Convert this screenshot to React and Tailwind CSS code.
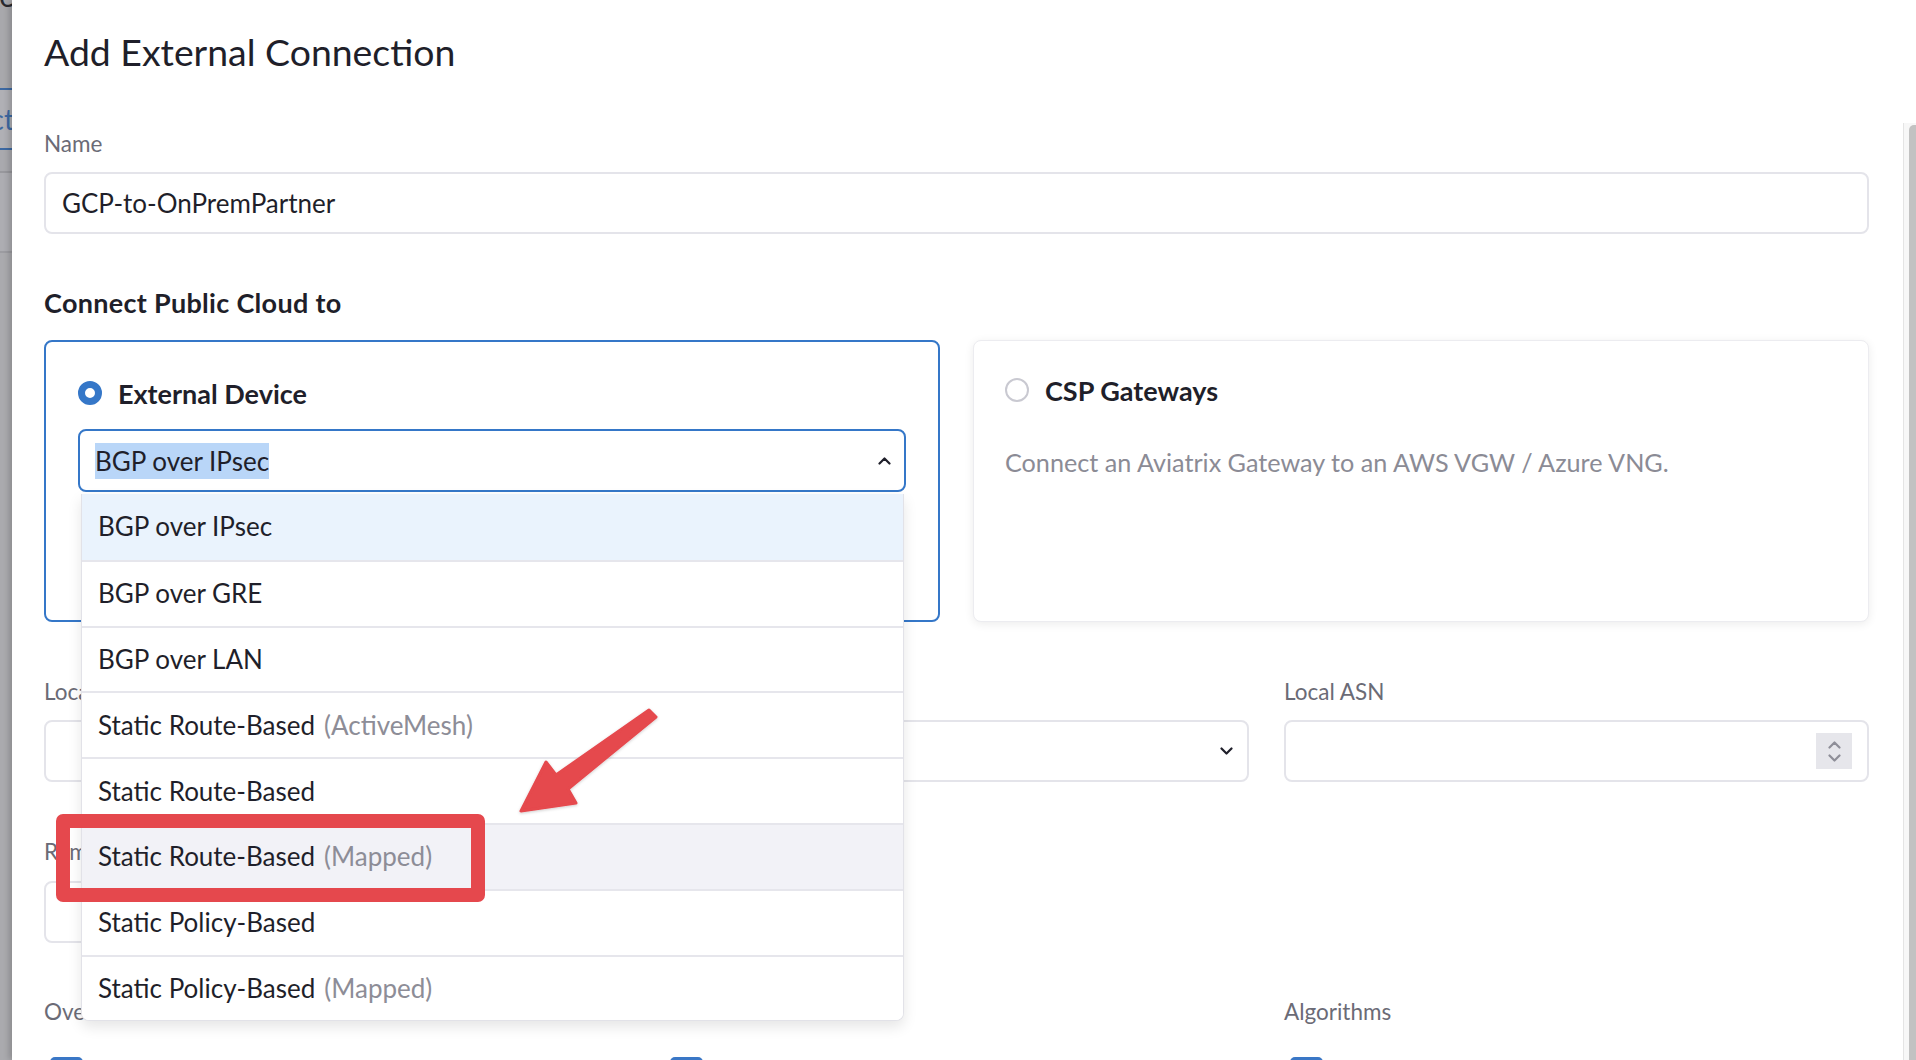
import React from "react";

function ChevronUp({ className = "", color = "#1f1f2a" }) {
  return (
    <svg className={className} width="13" height="8" viewBox="0 0 13 8" fill="none">
      <path d="M1.5 6.5 L6.5 1.5 L11.5 6.5" stroke={color} strokeWidth="2.2" strokeLinecap="round" strokeLinejoin="round" />
    </svg>
  );
}

function ChevronDown({ className = "", color = "#1f1f2a" }) {
  return (
    <svg className={className} width="13" height="8" viewBox="0 0 13 8" fill="none">
      <path d="M1.5 1.5 L6.5 6.5 L11.5 1.5" stroke={color} strokeWidth="2.2" strokeLinecap="round" strokeLinejoin="round" />
    </svg>
  );
}

const options = [
  { main: "BGP over IPsec", sub: "", bg: "bg-[#eaf3fd]" },
  { main: "BGP over GRE", sub: "", bg: "bg-white" },
  { main: "BGP over LAN", sub: "", bg: "bg-white" },
  { main: "Static Route-Based", sub: "(ActiveMesh)", bg: "bg-white" },
  { main: "Static Route-Based", sub: "", bg: "bg-white" },
  { main: "Static Route-Based", sub: "(Mapped)", bg: "bg-[#f2f2f7]" },
  { main: "Static Policy-Based", sub: "", bg: "bg-white" },
  { main: "Static Policy-Based", sub: "(Mapped)", bg: "bg-white" },
];

function Label({ children }) {
  return <div className="text-[22.5px] leading-[26.4px] text-[#6b6b76] whitespace-nowrap">{children}</div>;
}

function TextBox({ children }) {
  return (
    <div className="mt-[15px] flex h-[62px] items-center rounded-[8px] border-2 border-[#e4e4ea] bg-white pl-[16px] pr-[15px] text-[26px] leading-[1.2] text-[#1f1f2a]">
      {children}
    </div>
  );
}

export default function App() {
  return (
    <div className="relative flex h-[1060px] w-[1916px] overflow-hidden bg-white font-['Lato',sans-serif] text-[#1f1f2a]">
      {/* dimmed page behind the drawer */}
      <div className="flex w-[12px] shrink-0 flex-col overflow-hidden bg-[#a8a8ac]">
        <div className="flex h-[88px] justify-end overflow-hidden">
          <span className="-mr-[3px] -mt-[20px] text-[30px] leading-none text-[#2a2a30]">te</span>
        </div>
        <div className="flex h-[62px] items-center justify-end overflow-hidden border-y-2 border-[#3d69a2] bg-[#b0b0b5]">
          <span className="-mr-[2px] text-[28px] leading-none text-[#3d69a2]">ct</span>
        </div>
        <div className="h-[23px] border-b-2 border-[#98989d] bg-[#a9a9ae]"></div>
        <div className="h-[80px] border-b-2 border-[#9c9ca1] bg-[#adadb2]"></div>
        <div className="flex-1 bg-[#aaaaae]"></div>
      </div>

      {/* drawer panel */}
      <div className="relative flex flex-1 flex-col bg-white shadow-[-3px_0_6px_rgba(0,0,0,0.18)]">
        <div className="h-[123px] shrink-0 pl-[32px] pt-[30px]">
          <h1 className="text-[37.4px] font-normal leading-[1.2] text-[#1f1f2a]">Add External Connection</h1>
        </div>

        <div className="flex min-h-0 flex-1">
          <div className="flex-1 pl-[32px] pr-[34px] pt-[8px]">
            <Label>Name</Label>
            <TextBox>GCP-to-OnPremPartner</TextBox>

            <div className="mt-[53px] text-[27px] font-bold leading-[32.4px] tracking-[0.3px] text-[#1f1f2a]">Connect Public Cloud to</div>

            <div className="mt-[20px] grid h-[282px] grid-cols-2 gap-[33px]">
              {/* External Device card */}
              <div className="rounded-[8px] border-2 border-[#3577c8] bg-white px-[32px] pt-[36px]">
                <div className="flex items-center gap-[16px]">
                  <div className="h-[24px] w-[24px] rounded-full border-[7px] border-[#3577c8] bg-white"></div>
                  <span className="text-[27px] font-bold leading-[31.2px]">External Device</span>
                </div>
                <div className="relative mt-[20px]">
                  <div className="flex h-[63px] items-center justify-between rounded-[8px] border-2 border-[#3577c8] bg-white pl-[15px] pr-[13px]">
                    <span className="inline-block bg-[#b9d6f8] text-[26px] leading-[36px]">BGP over IPsec</span>
                    <ChevronUp />
                  </div>
                  <div className="absolute left-[3px] right-[2px] top-[calc(100%+2px)] z-20 overflow-hidden rounded-b-[8px] border-x border-b border-[#e2e2e8] bg-white shadow-[0_6px_14px_rgba(0,0,0,0.10)]">
                    {options.map((o, i) => (
                      <div
                        key={i}
                        className={`flex h-[65.8px] items-center pl-[16px] text-[26px] leading-[1.2] ${o.bg} ${i > 0 ? "border-t-2 border-[#e6e6ec]" : ""}`}
                      >
                        <span className="text-[#1f1f2a]">{o.main}</span>
                        {o.sub && <span className="ml-[9px] text-[#8d8d97]">{o.sub}</span>}
                      </div>
                    ))}
                  </div>
                </div>
              </div>

              {/* CSP Gateways card */}
              <div className="rounded-[8px] border border-[#ececf0] bg-white px-[31px] pt-[34px] shadow-[0_2px_10px_rgba(0,0,0,0.08)]">
                <div className="flex items-center gap-[16px]">
                  <div className="h-[24px] w-[24px] rounded-full border-2 border-[#c9c9d1] bg-white"></div>
                  <span className="text-[27px] font-bold leading-[31.2px]">CSP Gateways</span>
                </div>
                <div className="mt-[41px] text-[25.2px] leading-[31.2px] text-[#8b8b95]">
                  Connect an Aviatrix Gateway to an AWS VGW / Azure VNG.
                </div>
              </div>
            </div>

            {/* Row 2 */}
            <div className="mt-[57px] grid grid-cols-3 gap-x-[35px]">
              <div className="col-span-2">
                <Label>Local Gateway</Label>
                <div className="mt-[15px] flex h-[62px] items-center justify-end rounded-[8px] border-2 border-[#e4e4ea] bg-white pr-[14px]">
                  <ChevronDown />
                </div>
              </div>
              <div>
                <Label>Local ASN</Label>
                <div className="mt-[15px] flex h-[62px] items-center justify-end rounded-[8px] border-2 border-[#e4e4ea] bg-white pr-[15px]">
                  <div className="flex h-[36px] w-[36px] flex-col items-center justify-center gap-[5px] bg-[#e6e6eb]">
                    <ChevronUp color="#8e8e98" />
                    <ChevronDown color="#8e8e98" />
                  </div>
                </div>
              </div>
            </div>

            {/* Row 3 */}
            <div className="mt-[57px] grid grid-cols-3 gap-x-[35px]">
              <div>
                <Label>Remote Gateway IP</Label>
                <TextBox></TextBox>
              </div>
            </div>

            {/* Row 4 */}
            <div className="mt-[56px] grid grid-cols-3 gap-x-[35px]">
              <div>
                <Label>Over Private Network</Label>
                <div className="ml-[6px] mt-[32px] h-[33px] w-[33px] rounded-[5px] bg-[#3a77c6]"></div>
              </div>
              <div>
                <Label>Enable HA</Label>
                <div className="ml-[6px] mt-[32px] h-[33px] w-[33px] rounded-[5px] bg-[#3a77c6]"></div>
              </div>
              <div>
                <Label>Algorithms</Label>
                <div className="ml-[6px] mt-[32px] h-[33px] w-[33px] rounded-[5px] bg-[#3a77c6]"></div>
              </div>
            </div>
          </div>

          {/* scrollbar */}
          <div className="flex w-[13px] shrink-0 justify-end border-l border-[#e4e4e4] bg-[#f7f7f7] pt-[2px]">
            <div className="h-full w-[7px] rounded-tl-[5px] bg-[#c2c2c2]"></div>
          </div>
        </div>
      </div>

      {/* annotation: red highlight box */}
      <div className="pointer-events-none absolute left-[56px] top-[814px] z-30 h-[88px] w-[429px] rounded-[7px] border-[14px] border-[#e5484d]"></div>

      {/* annotation: red arrow */}
      <svg className="pointer-events-none absolute left-0 top-0 z-30" width="1916" height="1060" viewBox="0 0 1916 1060">
        <defs>
          <filter id="arrowShadow" x="-20%" y="-20%" width="140%" height="140%">
            <feDropShadow dx="0" dy="1" stdDeviation="1.5" floodColor="#000" floodOpacity="0.2" />
          </filter>
        </defs>
        <path
          d="M649 710 L556 775 L546 762 L521 811 L576 803 L568 789 L656 717 Z"
          fill="#e5484d"
          stroke="#e5484d"
          strokeWidth="3"
          strokeLinejoin="round"
          filter="url(#arrowShadow)"
        />
      </svg>
    </div>
  );
}
